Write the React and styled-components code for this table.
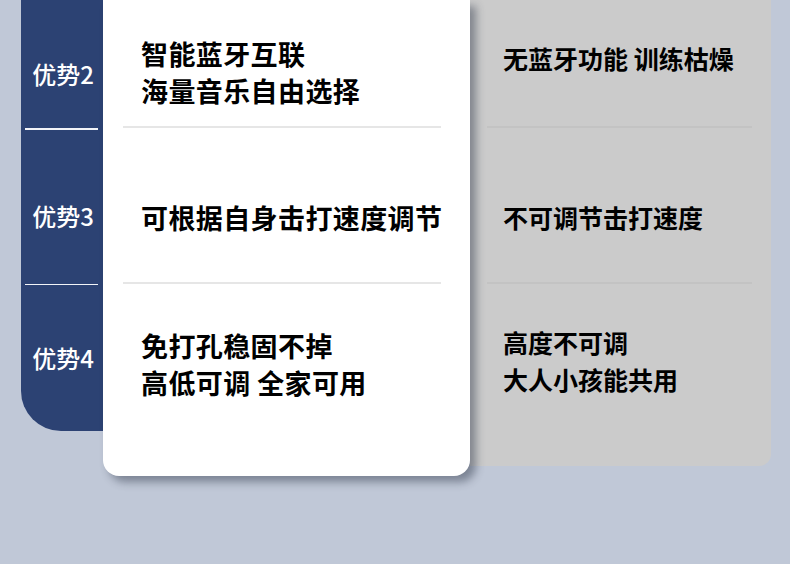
import React from "react";
import styled, { createGlobalStyle } from "styled-components";

const Global = createGlobalStyle`
  html, body { margin: 0; padding: 0; }
  body { background: #c0c8d7; font-family: "Noto Sans CJK SC", "Noto Sans", sans-serif; }
`;

const Page = styled.div`
  width: 790px;
  height: 564px;
  overflow: hidden;
  background: #c0c8d7;
  display: flex;
  align-items: flex-start;
  padding-left: 21px;
  box-sizing: border-box;
`;

const LabelColumn = styled.div`
  width: 82px;
  height: 431px;
  background: #2c4273;
  border-bottom-left-radius: 40px;
  display: flex;
  flex-direction: column;
`;

const LabelRow = styled.div`
  height: ${(p) => p.$h}px;
  padding-top: ${(p) => p.$pt}px;
  box-sizing: border-box;
  display: flex;
  justify-content: center;
`;

const Label = styled.span`
  color: #ffffff;
  font-size: 24px;
  line-height: 30px;
  font-weight: 500;
  padding-left: 2px;
`;

const LabelDivider = styled.div`
  height: 1.5px;
  margin: 0 5px 0 4px;
  background: #f2f4f8;
`;

const WhiteCard = styled.div`
  position: relative;
  z-index: 2;
  width: 367px;
  height: 476px;
  background: #ffffff;
  border-radius: 0 0 16px 16px;
  box-shadow: 6px 6px 8px rgba(40, 48, 66, 0.45);
  display: flex;
  flex-direction: column;
`;

const GrayCard = styled.div`
  width: 301px;
  height: 466px;
  background: #cbcbcb;
  border-bottom-right-radius: 12px;
  display: flex;
  flex-direction: column;
`;

const Row = styled.div`
  height: ${(p) => p.$h}px;
  padding-top: ${(p) => p.$pt}px;
  padding-left: ${(p) => p.$pl}px;
  box-sizing: border-box;
`;

const Divider = styled.div`
  height: 2px;
  margin: 0 ${(p) => p.$mr}px 0 ${(p) => p.$ml}px;
  background: ${(p) => p.$color};
`;

const MainText = styled.div`
  font-size: 27px;
  line-height: 37px;
  font-weight: 700;
  letter-spacing: 0.4px;
  color: #000000;
  white-space: nowrap;
`;

const SubText = styled.div`
  font-size: 25px;
  line-height: 37px;
  font-weight: 700;
  color: #000000;
  white-space: nowrap;
`;

const lines = (arr, Comp) => arr.map((t) => <Comp key={t}>{t}</Comp>);

export default function App() {
  return (
    <>
      <Global />
      <Page>
        <LabelColumn>
          <LabelRow $h={128} $pt={59}>
            <Label>优势2</Label>
          </LabelRow>
          <LabelDivider />
          <LabelRow $h={154} $pt={71}>
            <Label>优势3</Label>
          </LabelRow>
          <LabelDivider />
          <LabelRow $h={146} $pt={58}>
            <Label>优势4</Label>
          </LabelRow>
        </LabelColumn>

        <WhiteCard>
          <Row $h={126} $pt={35} $pl={38}>
            {lines(["智能蓝牙互联", "海量音乐自由选择"], MainText)}
          </Row>
          <Divider $ml={20} $mr={29} $color="#e6e6e6" />
          <Row $h={154} $pt={71} $pl={38}>
            {lines(["可根据自身击打速度调节"], MainText)}
          </Row>
          <Divider $ml={20} $mr={29} $color="#e6e6e6" />
          <Row $h={190} $pt={43} $pl={38}>
            {lines(["免打孔稳固不掉", "高低可调 全家可用"], MainText)}
          </Row>
        </WhiteCard>

        <GrayCard>
          <Row $h={126} $pt={40} $pl={33}>
            {lines(["无蓝牙功能 训练枯燥"], SubText)}
          </Row>
          <Divider $ml={17} $mr={19} $color="#c3c3c3" />
          <Row $h={154} $pt={71} $pl={33}>
            {lines(["不可调节击打速度"], SubText)}
          </Row>
          <Divider $ml={17} $mr={19} $color="#c3c3c3" />
          <Row $h={180} $pt={40} $pl={33}>
            {lines(["高度不可调", "大人小孩能共用"], SubText)}
          </Row>
        </GrayCard>
      </Page>
    </>
  );
}
